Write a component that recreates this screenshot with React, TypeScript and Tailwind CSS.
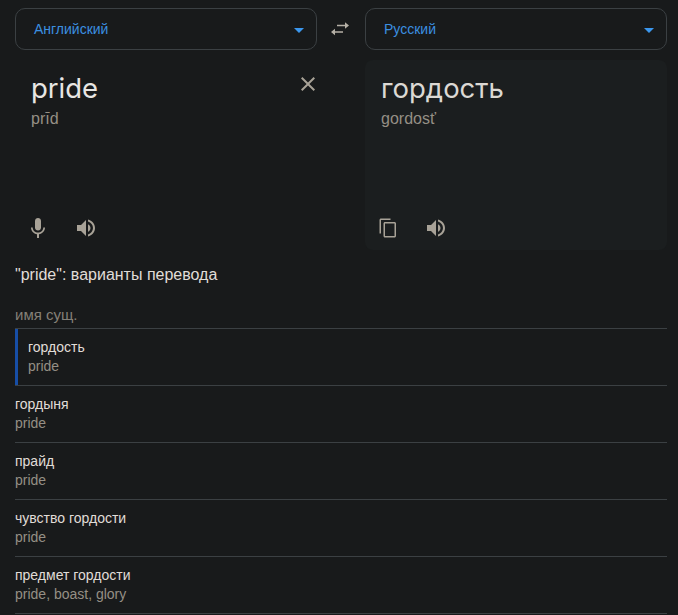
import React from "react";

const sans = "font-['Liberation_Sans',Arial,sans-serif]";

function Caret() {
  return (
    <svg width="10" height="5" viewBox="0 0 10 5" className="shrink-0">
      <path d="M0 0h10L5 5z" fill="#3b97ee" />
    </svg>
  );
}

function LangBox({ label }: { label: string }) {
  return (
    <div className="flex h-[42px] w-[302px] items-center justify-between rounded-[10px] border border-[#3b4043] pl-[18px] pr-[12px]">
      <span className="text-[14px] text-[#3b8fe0]">{label}</span>
      <span className="mt-[2px] flex"><Caret /></span>
    </div>
  );
}

function Speaker() {
  return (
    <svg width="24" height="24" viewBox="0 0 24 24" fill="#a8a297">
      <path d="M3 9v6h4l5 5V4L7 9H3z" />
      <path d="M14 8.200c1.500.7 2.500 2.200 2.500 3.800s-1 3.100-2.500 3.800z" />
      <path d="M14 3.500v2.100c2.900.9 5 3.500 5 6.400s-2.100 5.500-5 6.400v2.100c4-.9 7-4.400 7-8.500s-3-7.600-7-8.500z" />
    </svg>
  );
}

function Mic() {
  return (
    <svg width="24" height="24" viewBox="0 0 24 24" fill="#a8a297">
      <path d="M12 14.500c1.700 0 3-1.300 3-3V5c0-1.700-1.300-3-3-3S9 3.300 9 5v6.500c0 1.700 1.300 3 3 3z" />
      <path d="M17.300 11.500c0 3-2.500 5-5.300 5s-5.300-2-5.300-5H5c0 3.400 2.700 6.200 6 6.700V22h2v-3.800c3.300-.5 6-3.300 6-6.700h-1.700z" />
    </svg>
  );
}

function Copy() {
  return (
    <svg width="24" height="24" viewBox="0 0 24 24" fill="#a8a297">
      <path d="M14.500 2.500H5c-.8 0-1.500.7-1.500 1.500v13.500H5V4h9.500V2.500zM18.500 6H9c-.8 0-1.500.7-1.500 1.500V20c0 .8.7 1.500 1.500 1.500h9.500c.8 0 1.500-.7 1.500-1.500V7.500c0-.8-.7-1.500-1.500-1.500zm0 14H9V7.500h9.500V20z" />
    </svg>
  );
}

function Row({ title, sub, first }: { title: string; sub: string; first?: boolean }) {
  return (
    <div className="border-t border-[#3b4043]">
      <div
        className={
          "flex h-[56px] flex-col justify-center " +
          (first ? "border-l-[3px] border-[#174ea6] pl-[10px]" : "")
        }
      >
        <div className="text-[14px] leading-[19px] text-[#e0ddd8]">{title}</div>
        <div className="text-[14px] leading-[19px] text-[#958f85]">{sub}</div>
      </div>
    </div>
  );
}

export default function App() {
  return (
    <div className={"h-[615px] w-[678px] overflow-hidden bg-[#181a1b] px-[15px] pt-[8px] " + sans}>
      <div className="flex w-[652px] items-center justify-between">
        <LangBox label="Английский" />
        <svg width="20" height="20" viewBox="0 0 20 20" fill="#b5b0a6" className="ml-[-2px]">
          <path d="M15 3.200 19 6.500 15 9.800V7.300H7V5.700h8z" />
          <path d="M5 9.700 1 13l4 3.300v-2.500h8v-1.600H5z" />
        </svg>
        <LangBox label="Русский" />
      </div>

      <div className="mt-[10px] flex w-[652px] justify-between">
        <div className="relative flex h-[190px] w-[302px] flex-col justify-between pb-[10px] pl-[11px] pt-[10px]">
          <div className="pl-[5px]">
            <div className="font-['Inter',sans-serif] text-[27.500px] leading-[36px] text-[#e8e6e3]">pride</div>
            <div className="mt-[2px] text-[16px] leading-[21px] text-[#958f85]">prīd</div>
          </div>
          <div className="flex gap-[24px]">
            <Mic />
            <Speaker />
          </div>
          <svg width="24" height="24" viewBox="0 0 24 24" fill="#a8a297" className="absolute right-[-3px] top-[12px]">
            <path d="M19 6.400 17.600 5 12 10.600 6.400 5 5 6.400 10.600 12 5 17.600 6.400 19 12 13.400 17.600 19 19 17.600 13.400 12z" />
          </svg>
        </div>
        <div className="flex h-[190px] w-[302px] flex-col justify-between rounded-[8px] bg-[#1b1e1f] pb-[10px] pl-[11px] pt-[10px]">
          <div className="pl-[5px]">
            <div className="font-['Inter',sans-serif] text-[27.500px] leading-[36px] text-[#dcd9d4]">гордость</div>
            <div className="mt-[2px] text-[16px] leading-[21px] text-[#958f85]">gordosť</div>
          </div>
          <div className="flex gap-[24px]">
            <Copy />
            <Speaker />
          </div>
        </div>
      </div>

      <div className="mt-[14px] text-[16px] leading-[21px] text-[#e0ddd8]">"pride": варианты перевода</div>
      <div className="mt-[20px] text-[15px] leading-[19px] text-[#858078]">имя сущ.</div>
      <div className="mt-[4px] w-[652px] border-b border-[#3b4043]">
        <Row title="гордость" sub="pride" first />
        <Row title="гордыня" sub="pride" />
        <Row title="прайд" sub="pride" />
        <Row title="чувство гордости" sub="pride" />
        <Row title="предмет гордости" sub="pride, boast, glory" />
      </div>
    </div>
  );
}
